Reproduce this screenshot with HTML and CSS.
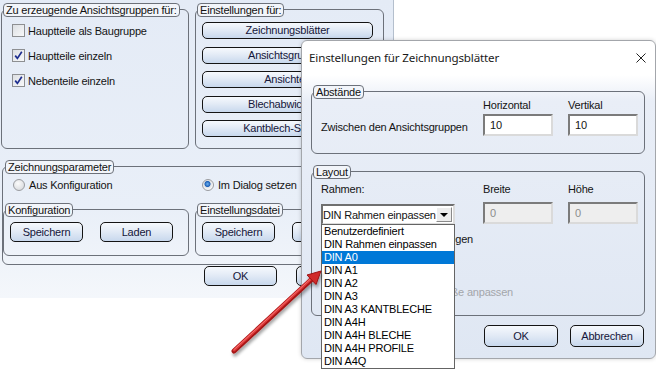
FILE: index.html
```html
<!DOCTYPE html>
<html lang="de">
<head>
    <meta charset="UTF-8">
    <title>Einstellungen für Zeichnungsblätter</title>
    <link rel="stylesheet" href="styles.css">
</head>
<body>
<div class="desk">

    <div class="main">
        <div class="top-row">
            <div class="group g-views">
                <div class="legend">Zu erzeugende Ansichtsgruppen für:</div>
                <div class="checks">
                    <label class="check"><span class="box"></span>Hauptteile als Baugruppe</label>
                    <label class="check"><span class="box"><svg viewBox="0 0 11 11"><path d="M2.2 5.6 L4.4 8.4 L8.8 1.8"/></svg></span>Hauptteile einzeln</label>
                    <label class="check"><span class="box"><svg viewBox="0 0 11 11"><path d="M2.2 5.6 L4.4 8.4 L8.8 1.8"/></svg></span>Nebenteile einzeln</label>
                </div>
            </div>
            <div class="group g-settings">
                <div class="legend">Einstellungen für:</div>
                <div class="btn-stack">
                    <button class="btn">Zeichnungsblätter</button>
                    <button class="btn">Ansichtsgruppen</button>
                    <button class="btn">Ansichten</button>
                    <button class="btn">Blechabwicklung</button>
                    <button class="btn">Kantblech-Schnitte</button>
                </div>
            </div>
        </div>

        <div class="group g-params">
            <div class="legend">Zeichnungsparameter</div>
            <div class="radios">
                <label class="radio"><span class="dot"></span>Aus Konfiguration</label>
                <label class="radio"><span class="dot on"></span>Im Dialog setzen</label>
            </div>
            <div class="sub-row">
                <div class="group g-sub">
                    <div class="legend">Konfiguration</div>
                    <div class="btn-row">
                        <button class="btn tall">Speichern</button>
                        <button class="btn tall">Laden</button>
                    </div>
                </div>
                <div class="group g-sub">
                    <div class="legend">Einstellungsdatei</div>
                    <div class="btn-row">
                        <button class="btn tall">Speichern</button>
                        <button class="btn tall">Laden</button>
                    </div>
                </div>
            </div>
        </div>

        <div class="main-actions">
            <button class="btn tall">OK</button>
            <button class="btn tall">Abbrechen</button>
        </div>
    </div>

    <div class="dialog">
        <div class="dlg-title">
            <span>Einstellungen für Zeichnungsblätter</span>
            <svg class="close" viewBox="0 0 10 10"><path d="M0.5 0.5 L9.5 9.5 M9.5 0.5 L0.5 9.5"/></svg>
        </div>
        <div class="dlg-body">
            <div class="group g-gaps">
                <div class="legend">Abstände</div>
                <div class="field-grid">
                    <span></span>
                    <span class="head">Horizontal</span>
                    <span class="head">Vertikal</span>
                    <span class="row-label">Zwischen den Ansichtsgruppen</span>
                    <span class="input">10</span>
                    <span class="input">10</span>
                </div>
            </div>

            <div class="group g-layout">
                <div class="legend">Layout</div>
                <div class="layout-grid">
                    <span class="head">Rahmen:</span>
                    <span class="head">Breite</span>
                    <span class="head">Höhe</span>
                    <div class="combo">
                        <span>DIN Rahmen einpassen</span>
                        <span class="combo-btn"></span>
                    </div>
                    <span class="input off">0</span>
                    <span class="input off">0</span>
                </div>
                <div class="opt opt-frame"><span>Rahmen über Ansichten legen</span></div>
                <div class="opt opt-fit"><span>Ansichten an Blattgröße anpassen</span></div>
            </div>

            <div class="dlg-actions">
                <button class="btn big">OK</button>
                <button class="btn big">Abbrechen</button>
            </div>
        </div>
    </div>

    <ul class="droplist">
        <li>Benutzerdefiniert</li>
        <li>DIN Rahmen einpassen</li>
        <li class="sel">DIN A0</li>
        <li>DIN A1</li>
        <li>DIN A2</li>
        <li>DIN A3</li>
        <li>DIN A3 KANTBLECHE</li>
        <li>DIN A4H</li>
        <li>DIN A4H BLECHE</li>
        <li>DIN A4H PROFILE</li>
        <li>DIN A4Q</li>
    </ul>

    <svg class="arrow" viewBox="224 262 104 100">
        <defs>
            <filter id="shade" x="-20%" y="-20%" width="140%" height="140%">
                <feDropShadow dx="1" dy="3" stdDeviation="1.5" flood-color="#000" flood-opacity="0.35"/>
            </filter>
        </defs>
        <g filter="url(#shade)">
            <line x1="234" y1="351" x2="312" y2="279" stroke="#a51414" stroke-width="5" stroke-linecap="round"/>
            <line x1="234" y1="350.2" x2="311" y2="279" stroke="#e03a3a" stroke-width="2.6" stroke-linecap="round"/>
            <line x1="234.5" y1="349.2" x2="310" y2="279.4" stroke="#f47a7a" stroke-width="0.9" stroke-linecap="round"/>
            <polygon points="321,271 316,284.5 307,275" fill="#d02a2a" stroke="#9c1212" stroke-width="1" stroke-linejoin="round"/>
        </g>
    </svg>

</div>
</body>
</html>
```

FILE: styles.css
```css
body {
    margin: 0;
    background: #ffffff;
    font-family: "Liberation Sans", Arial, sans-serif;
    font-size: 11px;
    letter-spacing: -0.2px;
    color: #141414;
}
.desk {
    position: relative;
    width: 656px;
    height: 370px;
    overflow: hidden;
}

/* main window */
.main {
    position: absolute;
    left: 0;
    top: 0;
    width: 394px;
    height: 298px;
    box-sizing: border-box;
    padding: 0 9px 0 1px;
    border-right: 1px solid #b4bfcd;
    background: linear-gradient(#e4ebf6, #e9eff8 70%, #f4f7fb);
}
.group {
    border: 1px solid #6c717a;
    border-radius: 6px;
    box-sizing: border-box;
}
.legend {
    display: block;
    width: fit-content;
    height: 14px;
    line-height: 12px;
    box-sizing: border-box;
    margin: -7px 0 0 1px;
    padding: 0 2px;
    border: 1px solid #6c717a;
    border-radius: 4px;
    background: #f2f5fa;
    color: #111;
}
.top-row {
    display: grid;
    grid-template-columns: 188px 189px;
    column-gap: 6px;
    padding-top: 9px;
}
.top-row .group {
    height: 140px;
}
.checks {
    display: flex;
    flex-direction: column;
    gap: 12px;
    padding: 7px 0 0 10px;
}
.check {
    display: flex;
    align-items: center;
    gap: 3px;
    height: 13px;
}
.box {
    width: 13px;
    height: 13px;
    box-sizing: border-box;
    border: 1px solid #8d8f92;
    background: linear-gradient(135deg, #dcdfe3, #f8f9fa);
    display: flex;
    align-items: center;
    justify-content: center;
}
.box svg {
    width: 11px;
    height: 11px;
}
.box path {
    fill: none;
    stroke: #1d2d8f;
    stroke-width: 1.7;
}
.btn {
    display: block;
    box-sizing: border-box;
    border: 1px solid #141414;
    border-radius: 5px;
    background: linear-gradient(#f6f9fd, #e3ebf6 45%, #c8d8ed);
    font: inherit;
    letter-spacing: inherit;
    color: #15163a;
    padding: 0;
    height: 17px;
    line-height: 15px;
    text-align: center;
    white-space: nowrap;
    overflow: hidden;
}
.btn-stack {
    display: flex;
    flex-direction: column;
    gap: 7.6px;
    padding: 5px 0 0 6px;
}
.btn-stack .btn {
    width: 171px;
}
.btn.tall {
    width: 73px;
    height: 20px;
    line-height: 18px;
}
.g-params {
    margin: 17px 0 0 1px;
    width: 382px;
    height: 99px;
}
.g-params > .legend {
    margin-left: 2px;
}
.radios {
    display: grid;
    grid-template-columns: 189px 1fr;
    margin-top: 4px;
}
.radio {
    display: flex;
    align-items: center;
    gap: 4px;
    height: 13px;
    padding-left: 10px;
}
.dot {
    width: 12px;
    height: 12px;
    box-sizing: border-box;
    border-radius: 50%;
    border: 1px solid #9a9ca0;
    background: radial-gradient(circle at 40% 35%, #fbfbfb, #d2d4d8);
}
.dot.on {
    background: radial-gradient(circle at 45% 40%, #6fb2f0 0, #1f62b8 2.6px, #dde0e4 3.4px, #f4f5f6 5px);
}
.sub-row {
    display: grid;
    grid-template-columns: 186px 186px;
    column-gap: 6px;
    margin-top: 18px;
}
.g-sub {
    height: 47px;
}
.btn-row {
    display: flex;
    gap: 17px;
    padding: 5px 0 0 6px;
}
.main-actions {
    display: flex;
    gap: 19px;
    padding: 1px 0 0 203px;
}

/* dialog */
.dialog {
    position: absolute;
    left: 301px;
    top: 40px;
    width: 355px;
    height: 319px;
    box-sizing: border-box;
    border: 1px solid #a3a6ab;
    border-radius: 6px;
    background: linear-gradient(#ffffff 0, #ffffff 34px, #e9eef7 60px, #dfe7f3 100%);
    box-shadow: 0 0 4px rgba(0, 0, 0, 0.18);
}
.dlg-title {
    display: flex;
    align-items: center;
    justify-content: space-between;
    height: 33px;
    padding: 0 9px 0 7px;
    font-family: "Noto Sans", "Open Sans", sans-serif;
    font-size: 11.6px;
    letter-spacing: -0.15px;
    color: #1a1a1a;
}
.close {
    width: 10px;
    height: 10px;
}
.close path {
    stroke: #222;
    stroke-width: 1;
    fill: none;
}
.dlg-body {
    padding: 0 10px 0 9px;
}
.g-gaps {
    margin-top: 17px;
    height: 63px;
}
.field-grid,
.layout-grid {
    display: grid;
    grid-template-columns: 147px 70px 70px;
    grid-template-rows: 13px 22px;
    column-gap: 15px;
    padding-left: 9px;
}
.field-grid {
    row-gap: 3px;
    align-items: center;
    margin-top: -1px;
}
.row-label {
    padding-top: 3px;
}
.input {
    height: 22px;
    box-sizing: border-box;
    border: 2px solid;
    border-color: #7b7b7b #dadada #dadada #7b7b7b;
    background: #ffffff;
    padding: 2px 0 0 5px;
    line-height: 14px;
}
.input.off {
    background: #eeeeee;
    color: #8c8c8c;
}
.g-layout {
    margin-top: 17px;
    height: 145px;
}
.layout-grid {
    row-gap: 6px;
    margin-top: 4px;
}
.combo {
    width: 134px;
    height: 21px;
    margin-top: 2px;
    box-sizing: border-box;
    border: 2px solid;
    border-color: #6f6f6f #dcdcdc #dcdcdc #6f6f6f;
    background: #ffffff;
    display: flex;
    align-items: center;
    justify-content: space-between;
    padding-right: 1px;
    white-space: nowrap;
}
.combo-btn {
    position: relative;
    width: 16px;
    height: 15px;
    box-sizing: border-box;
    border: 1px solid;
    border-color: #ffffff #8a8a8a #8a8a8a #ffffff;
    background: #ececec;
}
.combo-btn::after {
    content: "";
    position: absolute;
    left: 3px;
    top: 5px;
    border-left: 4px solid transparent;
    border-right: 4px solid transparent;
    border-top: 4px solid #000;
}
/* options hidden behind the open list: only their text ends show */
.opt {
    display: flex;
    justify-content: flex-end;
    white-space: nowrap;
}
.opt span {
    flex-shrink: 0;
}
.opt-frame {
    width: 161px;
    margin-top: 9px;
}
.opt-fit {
    width: 201px;
    margin-top: 41px;
    color: #a3a6ab;
}
.dlg-actions {
    display: flex;
    justify-content: flex-end;
    gap: 12px;
    margin-top: 9px;
    padding-right: 1px;
}
.btn.big {
    width: 74px;
    height: 22px;
    line-height: 20px;
}

/* open combo list */
.droplist {
    position: absolute;
    left: 321px;
    top: 224px;
    width: 134px;
    margin: 0;
    padding: 0;
    list-style: none;
    box-sizing: border-box;
    border: 1px solid #646464;
    background: #ffffff;
}
.droplist li {
    height: 13px;
    line-height: 13px;
    padding-left: 2px;
    white-space: nowrap;
    color: #000;
}
.droplist li.sel {
    background: #0078d7;
    color: #ffffff;
}

.arrow {
    position: absolute;
    left: 224px;
    top: 262px;
    width: 104px;
    height: 100px;
    overflow: visible;
}
```
